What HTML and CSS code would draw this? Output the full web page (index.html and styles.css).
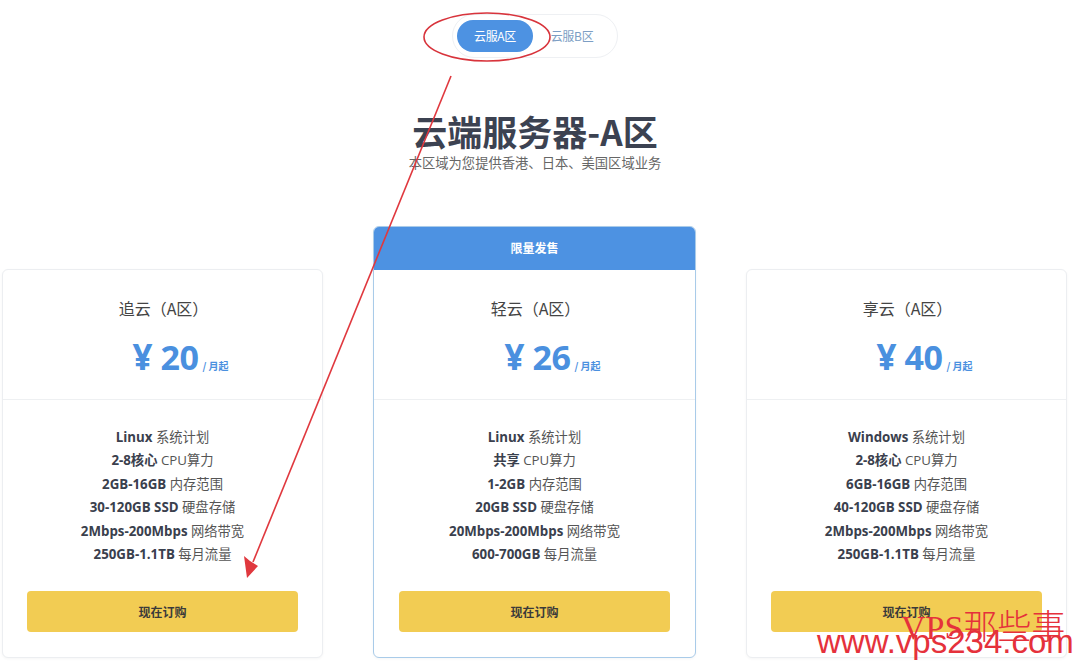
FILE: index.html
```html
<!DOCTYPE html>
<html lang="zh">
<head>
<meta charset="utf-8">
<title>云端服务器-A区</title>
<link rel="stylesheet" href="styles.css">
</head>
<body>
<div class="page">
  <div class="content">
    <div class="tabs-row">
      <div class="tabs">
        <span class="tab active">云服A区</span>
        <span class="tab">云服B区</span>
      </div>
    </div>
    <h1 class="title">云端服务器-A区</h1>
    <p class="subtitle">本区域为您提供香港、日本、美国区域业务</p>

    <div class="cards">
      <div class="card">
        <div class="card-top">
          <div class="name">追云（A区）</div>
          <div class="price"><span class="yen">¥</span><span class="num">20</span><span class="unit">/ 月起</span></div>
        </div>
        <ul class="features">
          <li><b>Linux</b> 系统计划</li>
          <li><b>2-8核心</b> CPU算力</li>
          <li><b>2GB-16GB</b> 内存范围</li>
          <li><b>30-120GB SSD</b> 硬盘存储</li>
          <li><b>2Mbps-200Mbps</b> 网络带宽</li>
          <li><b>250GB-1.1TB</b> 每月流量</li>
        </ul>
        <div class="btn">现在订购</div>
      </div>

      <div class="card featured">
        <div class="badge">限量发售</div>
        <div class="card-top">
          <div class="name">轻云（A区）</div>
          <div class="price"><span class="yen">¥</span><span class="num">26</span><span class="unit">/ 月起</span></div>
        </div>
        <ul class="features">
          <li><b>Linux</b> 系统计划</li>
          <li><b>共享</b> CPU算力</li>
          <li><b>1-2GB</b> 内存范围</li>
          <li><b>20GB SSD</b> 硬盘存储</li>
          <li><b>20Mbps-200Mbps</b> 网络带宽</li>
          <li><b>600-700GB</b> 每月流量</li>
        </ul>
        <div class="btn">现在订购</div>
      </div>

      <div class="card">
        <div class="card-top">
          <div class="name">享云（A区）</div>
          <div class="price"><span class="yen">¥</span><span class="num">40</span><span class="unit">/ 月起</span></div>
        </div>
        <ul class="features">
          <li><b>Windows</b> 系统计划</li>
          <li><b>2-8核心</b> CPU算力</li>
          <li><b>6GB-16GB</b> 内存范围</li>
          <li><b>40-120GB SSD</b> 硬盘存储</li>
          <li><b>2Mbps-200Mbps</b> 网络带宽</li>
          <li><b>250GB-1.1TB</b> 每月流量</li>
        </ul>
        <div class="btn">现在订购</div>
      </div>
    </div>
  </div>

  <svg class="annot" width="1080" height="662" viewBox="0 0 1080 662">
    <ellipse cx="487" cy="37" rx="63" ry="24" fill="none" stroke="#d8343c" stroke-width="1.6"/>
    <path d="M451 76 L253 562" stroke="#e0383e" stroke-width="1.6" fill="none"/>
    <path d="M247 578 L244 556 L250 561 L258 566 Z" fill="#e0383e"/>
  </svg>

  <div class="watermark">
    <span class="wm-top">VPS那些事</span>
    <span class="wm-url">www.vps234.com</span>
  </div>
</div>
</body>
</html>
```

FILE: styles.css
```css
* { box-sizing: border-box; }
html, body { margin: 0; padding: 0; background: #fff; }
body {
  font-family: "Open Sans", "Noto Sans CJK SC", sans-serif;
  color: #333;
  width: 1080px;
  height: 662px;
  overflow: hidden;
}
.page { position: relative; width: 1080px; height: 662px; }
.content { width: 1070px; }

.tabs-row { display: flex; justify-content: center; padding-top: 14px; }
.tabs {
  display: flex;
  align-items: center;
  height: 44px;
  padding: 0 4px;
  border: 1px solid #eef0f3;
  border-radius: 22px;
  width: 166px;
}
.tab {
  font-family: "Noto Sans CJK SC", sans-serif;
  font-size: 12px;
  color: #7c9ec4;
  height: 32px;
  line-height: 32px;
  width: 76px;
  text-align: center;
  letter-spacing: -0.3px;
}
.tab.active { background: #4d92e2; color: #fff; border-radius: 16px; }
.tab + .tab { width: 78px; }

.title {
  margin: 0;
  margin-top: 55px;
  text-align: center;
  font-family: "Noto Sans CJK SC", sans-serif;
  font-weight: 700;
  font-size: 35px;
  line-height: 36px;
  color: #3c4251;
}
.subtitle {
  margin: 0;
  margin-top: 5px;
  text-align: center;
  font-family: "Noto Sans CJK SC", sans-serif;
  font-size: 13.3px;
  line-height: 18px;
  color: #666;
}

.cards {
  display: flex;
  align-items: flex-end;
  gap: 50px;
  padding-left: 2px;
  margin-top: 54px;
}
.card {
  width: 321px;
  border: 1px solid #eceef1;
  border-radius: 6px;
  box-shadow: 0 1px 3px rgba(0,0,0,0.04);
  background: #fff;
  display: flex;
  flex-direction: column;
  align-items: center;
  padding-bottom: 25px;
}
.card.featured { width: 323px; border-color: #a9cbe9; overflow: hidden; }
.badge {
  align-self: stretch;
  height: 44px;
  line-height: 44px;
  background: #4d92e2;
  color: #fff;
  text-align: center;
  font-family: "Noto Sans CJK SC", sans-serif;
  font-size: 12px;
  font-weight: 700;
  margin: -1px -1px 0;
}
.card-top {
  align-self: stretch;
  height: 130px;
  border-bottom: 1px solid #eef0f2;
  display: flex;
  flex-direction: column;
  align-items: center;
  padding-top: 26px;
}
.name {
  font-family: "Noto Sans CJK SC", sans-serif;
  font-size: 16px;
  line-height: 24px;
  color: #444;
  padding-left: 2px;
}
.price {
  margin-top: 17px;
  display: flex;
  align-items: baseline;
  color: #4a90df;
  font-weight: 700;
  padding-left: 36px;
}
.yen { font-family: "Open Sans", sans-serif; font-size: 35px; line-height: 40px; margin-right: 8px; }
.num { font-family: "Open Sans", sans-serif; font-size: 34px; line-height: 40px; letter-spacing: -0.5px; }
.unit {
  font-family: "Noto Sans CJK SC", sans-serif;
  font-size: 10px;
  font-weight: 700;
  margin-left: 4px;
}
.features {
  list-style: none;
  margin: 0;
  padding: 26px 0 0;
  text-align: center;
  font-size: 13.3px;
  line-height: 23.4px;
  color: #555;
  font-family: "Open Sans", "Noto Sans CJK SC", sans-serif;
}
.features b { font-weight: 700; color: #3a404d; }
.btn {
  margin-top: 25px;
  width: 271px;
  height: 41px;
  line-height: 41px;
  background: #f2cc53;
  border-radius: 4px;
  text-align: center;
  font-family: "Noto Sans CJK SC", sans-serif;
  font-size: 12px;
  font-weight: 700;
  color: #3a3a3a;
}

.annot { position: absolute; left: 0; top: 0; pointer-events: none; }

.watermark {
  position: absolute;
  left: 0;
  top: 0;
  width: 1080px;
  height: 662px;
  pointer-events: none;
  color: #e5313b;
}
.wm-top {
  position: absolute;
  left: 901px;
  top: 608px;
  font-family: "Liberation Serif", "Noto Sans CJK SC", serif;
  font-size: 34px;
  line-height: 40px;
  font-weight: 300;
}
.wm-url {
  position: absolute;
  left: 817px;
  top: 622px;
  font-family: "Liberation Sans", sans-serif;
  font-size: 33px;
  line-height: 40px;
}
```
